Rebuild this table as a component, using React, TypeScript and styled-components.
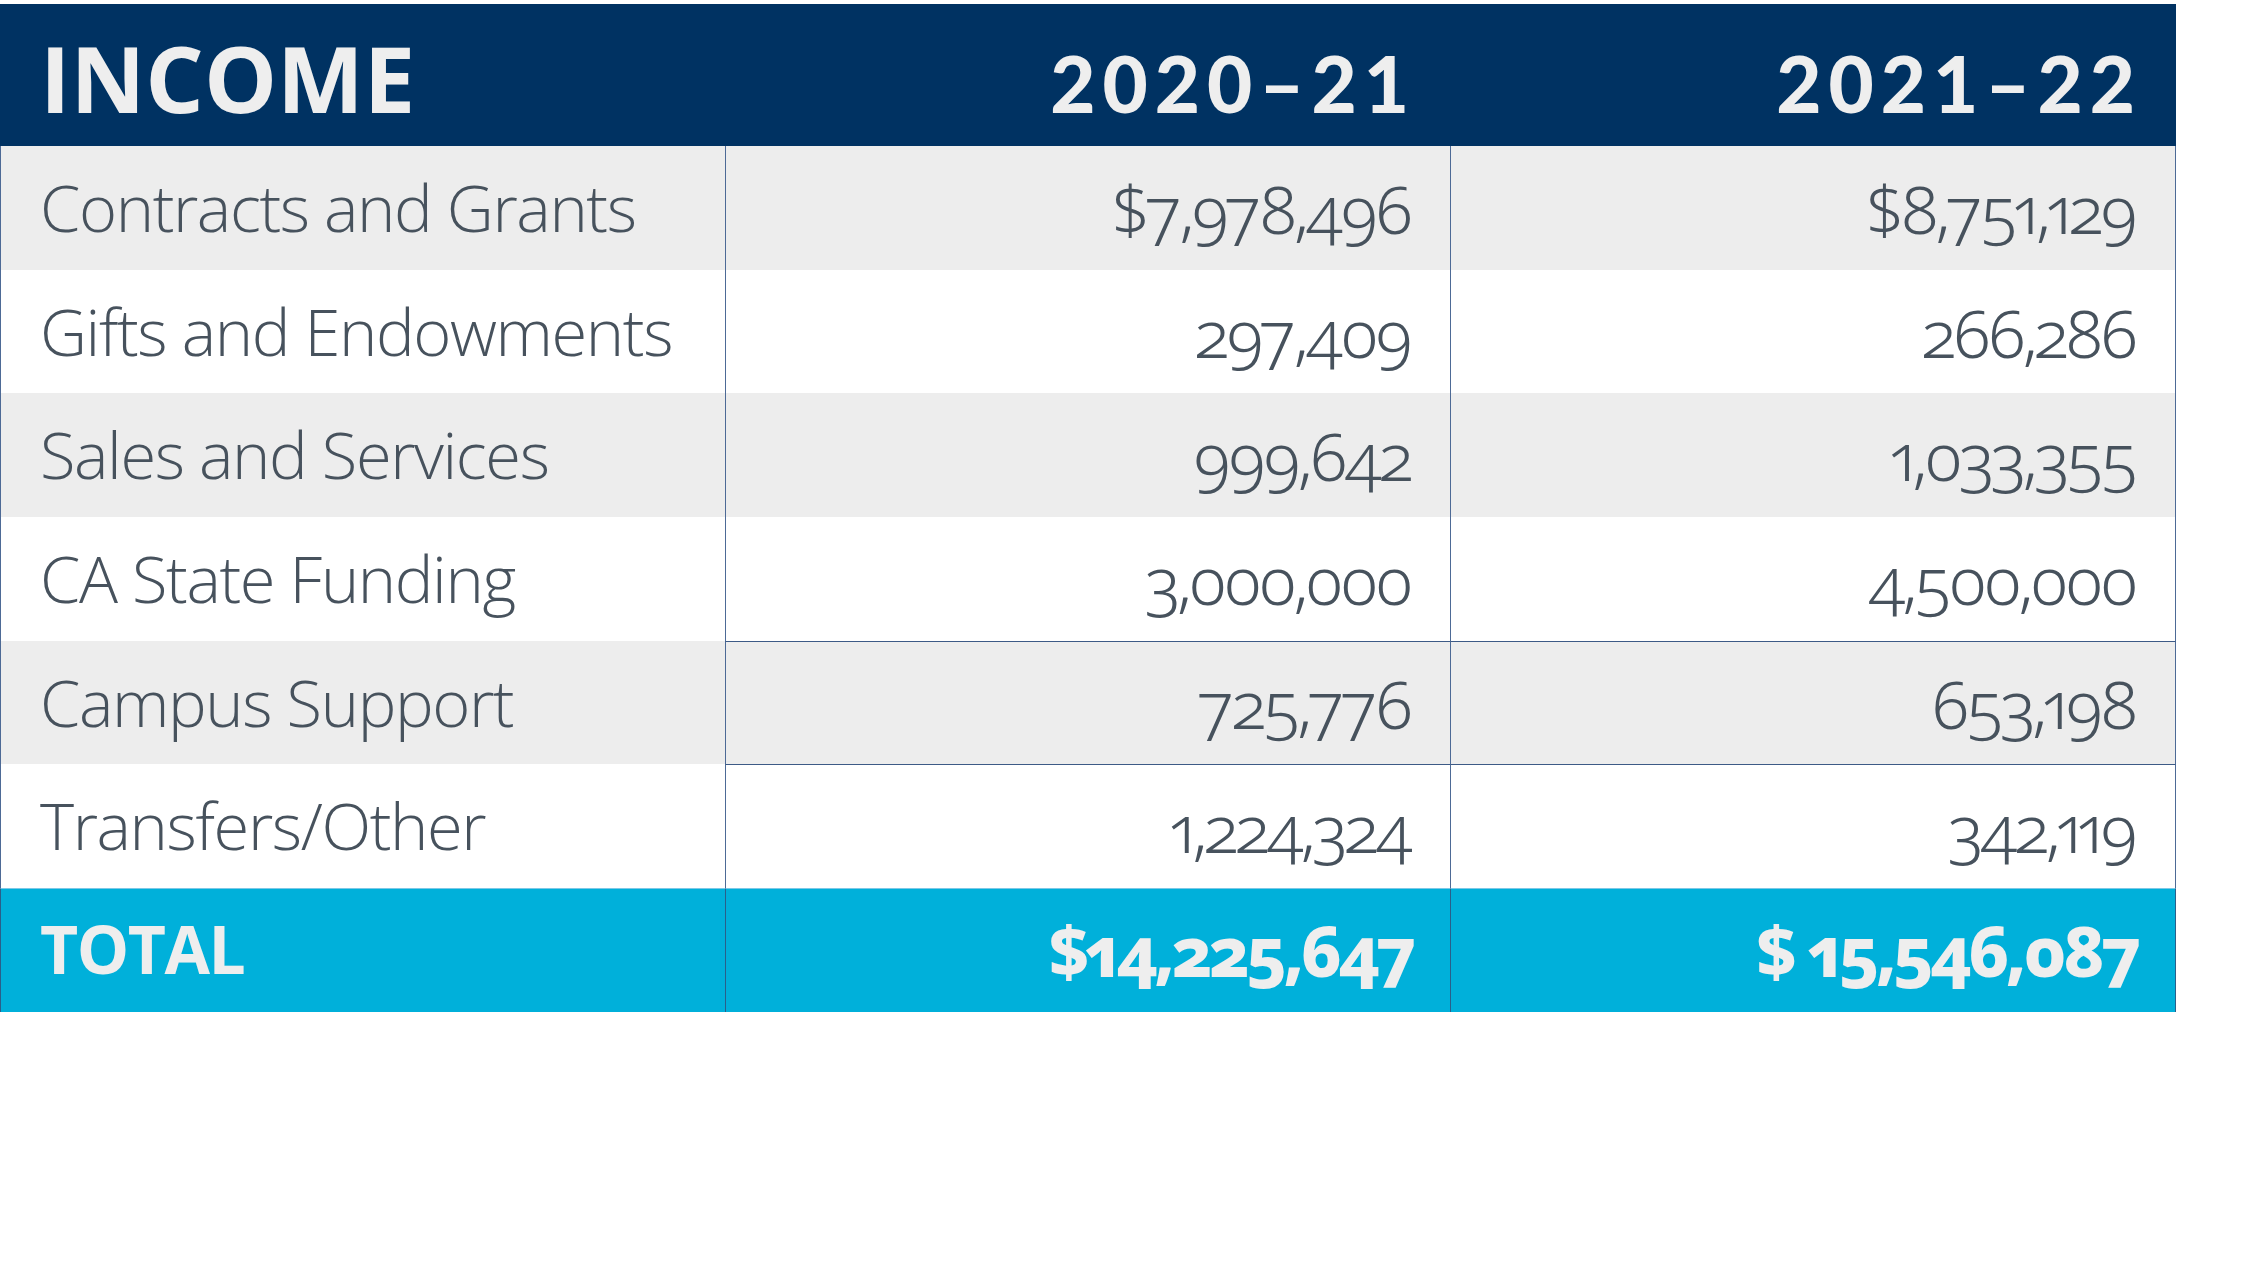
import React from 'react';
import styled, { createGlobalStyle } from 'styled-components';

const GlobalStyle = createGlobalStyle`
  html, body {
    margin: 0;
    padding: 0;
    background: #ffffff;
  }
  body {
    font-family: 'Open Sans', 'Noto Sans', sans-serif;
  }
`;

const Page = styled.div`
  width: 2242px;
  height: 1269px;
  padding-top: 4px;
  box-sizing: border-box;
`;

const Table = styled.div`
  width: 2176px;
  display: grid;
  grid-template-columns: 725px 725px 726px;
`;

const HeaderCell = styled.div<{ $align?: 'left' | 'right' }>`
  height: 142px;
  background: #003262;
  color: #eeeeee;
  display: flex;
  align-items: center;
  justify-content: ${(p) => (p.$align === 'left' ? 'flex-start' : 'flex-end')};
  padding: ${(p) => (p.$align === 'left' ? '4px 0 0 40px' : '16px 34px 0 0')};
  box-sizing: border-box;
`;

const HeaderTitle = styled.span`
  font-family: 'Open Sans', sans-serif;
  font-weight: 700;
  font-size: 92px;
  letter-spacing: 0;
`;

const HeaderYear = styled.span`
  font-family: 'Lato', sans-serif;
  font-weight: 900;
  font-size: 78px;
  letter-spacing: 7px;
`;

interface ICellProps {
  $shade: boolean;
  $first?: boolean;
  $last?: boolean;
  $topLine?: boolean;
}

const Cell = styled.div<ICellProps>`
  height: 123.7px;
  background: ${(p) => (p.$shade ? '#ededed' : '#ffffff')};
  border-left: 1px solid #4d6a96;
  border-right: ${(p) => (p.$last ? '1px solid #4d6a96' : 'none')};
  border-top: ${(p) => (p.$topLine ? '1.5px solid #3d5a86' : 'none')};
  box-sizing: border-box;
  display: flex;
  align-items: center;
  justify-content: ${(p) => (p.$first ? 'flex-start' : 'flex-end')};
  padding: ${(p) => (p.$first ? '0 0 2px 39px' : '0 40px 0 0')};
  color: #47525d;
`;

const Label = styled.span`
  font-family: 'Open Sans', sans-serif;
  font-weight: 300;
  font-size: 65px;
  letter-spacing: -1.4px;
  white-space: nowrap;
`;

const Amount = styled.span`
  font-family: 'Noto Sans', sans-serif;
  font-weight: 300;
  font-size: 67px;
  font-variant-numeric: oldstyle-nums proportional-nums;
  letter-spacing: -3.5px;
  white-space: nowrap;
`;

const TotalCell = styled.div<{ $first?: boolean; $last?: boolean }>`
  height: 123.7px;
  background: #00b0da;
  border-top: 1px solid #7cc8e6;
  border-left: 1px solid #2a5f8a;
  border-right: ${(p) => (p.$last ? '1px solid #2a5f8a' : 'none')};
  box-sizing: border-box;
  display: flex;
  align-items: center;
  justify-content: ${(p) => (p.$first ? 'flex-start' : 'flex-end')};
  padding: ${(p) => (p.$first ? '0 0 4px 39px' : '0 38px 0 0')};
  color: #eeeeee;
`;

const TotalLabel = styled.span`
  font-family: 'Open Sans', sans-serif;
  font-weight: 700;
  font-size: 66px;
  letter-spacing: -1.5px;
`;

const TotalAmount = styled.span`
  font-family: 'Noto Sans', sans-serif;
  font-weight: 800;
  font-size: 70px;
  font-variant-numeric: oldstyle-nums proportional-nums;
  letter-spacing: -3.5px;
  white-space: nowrap;
`;

const rows = [
  { label: 'Contracts and Grants', a: '$7,978,496', b: '$8,751,129' },
  { label: 'Gifts and Endowments', a: '297,409', b: '266,286' },
  { label: 'Sales and Services', a: '999,642', b: '1,033,355' },
  { label: 'CA State Funding', a: '3,000,000', b: '4,500,000' },
  { label: 'Campus Support', a: '725,776', b: '653,198', line: true },
  { label: 'Transfers/Other', a: '1,224,324', b: '342,119', line: true },
];

const App = () => {
  return (
    <>
      <GlobalStyle />
      <Page>
        <Table>
          <HeaderCell $align="left">
            <HeaderTitle>INCOME</HeaderTitle>
          </HeaderCell>
          <HeaderCell>
            <HeaderYear>2020–21</HeaderYear>
          </HeaderCell>
          <HeaderCell>
            <HeaderYear>2021–22</HeaderYear>
          </HeaderCell>

          {rows.map((row, i) => (
            <React.Fragment key={row.label}>
              <Cell $shade={i % 2 === 0} $first>
                <Label>{row.label}</Label>
              </Cell>
              <Cell $shade={i % 2 === 0} $topLine={row.line}>
                <Amount>{row.a}</Amount>
              </Cell>
              <Cell $shade={i % 2 === 0} $topLine={row.line} $last>
                <Amount>{row.b}</Amount>
              </Cell>
            </React.Fragment>
          ))}

          <TotalCell $first>
            <TotalLabel>TOTAL</TotalLabel>
          </TotalCell>
          <TotalCell>
            <TotalAmount>$14,225,647</TotalAmount>
          </TotalCell>
          <TotalCell $last>
            <TotalAmount>$ 15,546,087</TotalAmount>
          </TotalCell>
        </Table>
      </Page>
    </>
  );
};

export default App;
